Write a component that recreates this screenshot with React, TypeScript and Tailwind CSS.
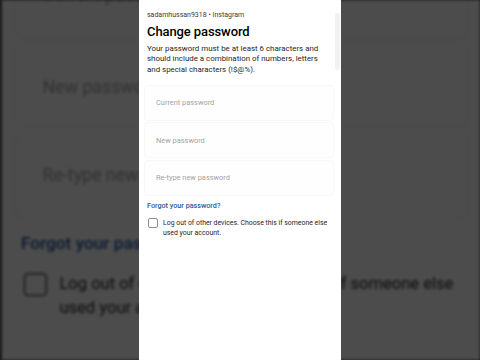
import React from "react";

function Card({ overlay }: { overlay?: boolean }) {
  return (
    <div className="relative w-[202px] h-[360px] bg-white shrink-0 pl-[8px] pr-[7px]">
      <div className="pt-[11px] text-[7px] leading-[9px] text-[#3a3a3a] whitespace-nowrap">
        sadamhussan9318 • Instagram
      </div>
      <div className="mt-[3px] text-[13px] leading-[18px] tracking-[-0.1px] text-black font-medium whitespace-nowrap">
        Change password
      </div>
      <div className="mt-[2.5px] text-[7.9px] leading-[10.7px] text-[#262626]">
        <div className="whitespace-nowrap">Your password must be at least 6 characters and</div>
        <div className="whitespace-nowrap">should include a combination of numbers, letters</div>
        <div className="whitespace-nowrap">and special characters (!$@%).</div>
      </div>
      <div className="mt-[9px] -ml-[3px] flex flex-col gap-[1.5px]">
        {["Current password", "New password", "Re-type new password"].map((t) => (
          <div
            key={t}
            className="h-[36px] flex items-center pl-[11px] rounded-[4px] border border-[#f8f8f8] bg-[#fefefe] text-[7.4px] text-[#a3a3a3] whitespace-nowrap"
          >
            {t}
          </div>
        ))}
      </div>
      <div className="mt-[5px] text-[7.2px] leading-[10px] text-[#1f5aa0] font-medium whitespace-nowrap">
        Forgot your password?
      </div>
      <div className="mt-[7px] flex items-start gap-[5.5px] pl-[0.5px]">
        <div className="w-[10px] h-[10px] shrink-0 rounded-[2px] border border-[#8e8e8e] bg-white" />
        <div className="text-[6.9px] leading-[10px] text-[#262626]">
          <div className="whitespace-nowrap">Log out of other devices. Choose this if someone else</div>
          <div className="whitespace-nowrap">used your account.</div>
        </div>
      </div>
      {overlay && (
        <div className="absolute right-[1px] top-[13px] w-[5px] h-[57px] rounded-[3px] bg-[#f2f2f2]" />
      )}
    </div>
  );
}

export default function App() {
  return (
    <div className="relative w-[480px] h-[360px] overflow-hidden bg-[#4d4d4d] font-['Roboto','Noto_Sans',sans-serif]">
      <div className="absolute inset-0 overflow-hidden blur-[1.5px]">
        <div className="w-[480px] h-[360px] flex justify-center origin-[237px_179px] scale-[2.4]">
          <Card />
        </div>
      </div>
      <div className="absolute inset-0 bg-black/70" />
      <div className="relative flex justify-center">
        <Card overlay />
      </div>
    </div>
  );
}
